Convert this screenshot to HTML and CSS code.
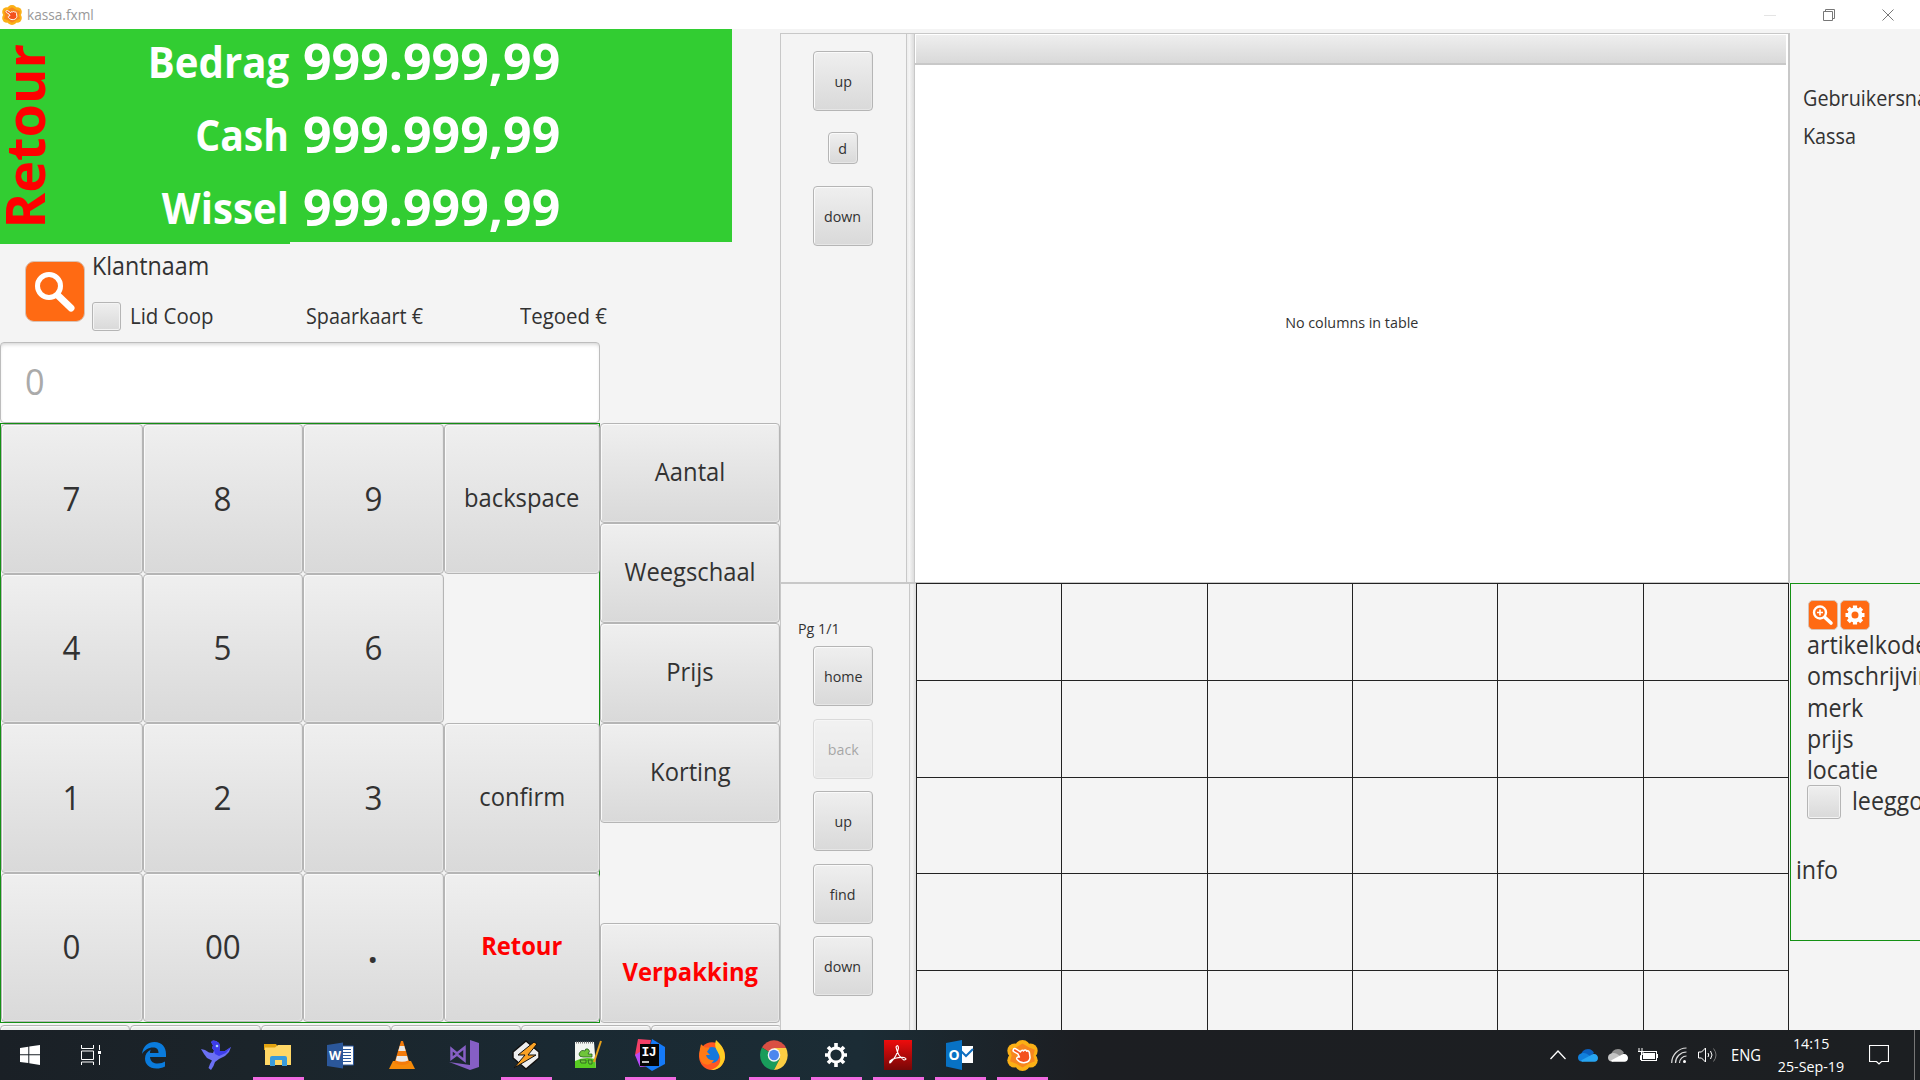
FILE: index.html
```html
<!DOCTYPE html>
<html lang="nl">
<head>
<meta charset="utf-8">
<title>kassa.fxml</title>
<link rel="stylesheet" href="styles.css">
</head>
<body>
<svg class="defs" width="0" height="0">
  <defs>
    <symbol id="hand-flower" viewBox="0 0 30 30">
      <g fill="#fbb016"><circle cx="15" cy="7.500" r="7.500"/><circle cx="15" cy="22.500" r="7.500"/><circle cx="7.500" cy="10.500" r="7.200"/><circle cx="22.500" cy="10.500" r="7.200"/><circle cx="7.500" cy="19.500" r="7.200"/><circle cx="22.500" cy="19.500" r="7.200"/></g>
      <path d="M15 3.500L21 7L27 9.500L25.500 15L27 20.500L21 23L15 26.500L9 23L3 20.500L4.500 15L3 9.500L9 7Z" fill="#f7861f"/>
      <path d="M6 9.500C6.500 8 8 8 9 8.800L13 11.500C13.500 10 15 9.500 16 10.500C17 9.300 18.700 9.500 19 10.800C20.500 10 21.500 11 21.700 12.500L22.300 17C22 19.500 20 21.500 17.500 21.800C14 22.500 11.500 21 9.500 18.500C9 17 10.500 16 12 16.500L10.500 13.500L7 11.500C6 11 5.700 10.300 6 9.500Z" fill="#f4511e" stroke="#fff" stroke-width="1.500" stroke-linejoin="round"/>
    </symbol>
    <symbol id="cloud" viewBox="0 0 20 13">
      <path fill="var(--back)" d="M3 7 C3 3 6 0 10 0 C13 0 15 2 16 4 L11 8 Z"/>
      <path fill="var(--side)" d="M4 12.500 C1 12.500 0 10.500 0 8.500 C0 6 2 4.500 4 4.300 C7 3.500 9 5 12 7 L5 12.500 Z"/>
      <path fill="var(--front)" d="M3 11.500 L14 5.500 C17.500 4 20 6.500 20 9 C20 11 18.500 12.800 16.500 12.800 L5 12.800 C4 12.800 3.500 12.300 3 11.500 Z"/>
    </symbol>
  </defs>
</svg>

<div class="screen">
  <header class="titlebar">
    <svg class="app-icon" viewBox="0 0 30 30"><use href="#hand-flower"/></svg>
    <span class="title t">kassa.fxml</span>
    <div class="window-controls">
      <svg width="12" height="12"><path d="M0 6.500H12" stroke="#e4e4e4" fill="none"/></svg>
      <svg width="12" height="12"><path d="M.5 2.500H9.500V11.500H.5ZM2.500 2.500V.5H11.500V9.500H9.500" stroke="#777" fill="none"/></svg>
      <svg width="12" height="12"><path d="M.5 .5L11.500 11.500M11.500 .5L.5 11.500" stroke="#777" fill="none"/></svg>
    </div>
  </header>

  <main class="main">
    <section class="left">
      <div class="totals">
        <div class="totals-labels">
          <div class="retour-side"><span>Retour</span></div>
          <div class="labels">
            <div><span class="tr">Bedrag</span></div>
            <div><span class="tr cash">Cash</span></div>
            <div><span class="tr">Wissel</span></div>
          </div>
        </div>
        <div class="amounts">
          <div>999.999,99</div>
          <div>999.999,99</div>
          <div>999.999,99</div>
        </div>
      </div>

      <div class="client">
        <button class="orange big-search"><svg width="58" height="58" viewBox="0 0 58 58" fill="none" stroke="#fff"><circle cx="23" cy="23" r="11.500" stroke-width="5"/><path d="M32 32.500L45 45" stroke-width="7" stroke-linecap="round"/></svg></button>
        <div class="client-info">
          <div class="client-name"><span class="t">Klantnaam</span></div>
          <div class="client-row">
            <i class="check"></i>
            <span class="lid"><span class="t">Lid Coop</span></span>
            <span class="spaar"><span class="t">Spaarkaart €</span></span>
            <span><span class="t">Tegoed €</span></span>
          </div>
        </div>
      </div>

      <div class="entry"><span class="t">0</span></div>

      <div class="pads">
        <div class="keypad">
          <button class="btn num"><span>7</span></button><button class="btn num"><span>8</span></button><button class="btn num"><span>9</span></button><button class="btn word"><span>backspace</span></button>
          <button class="btn num"><span>4</span></button><button class="btn num"><span>5</span></button><button class="btn num"><span>6</span></button><div></div>
          <button class="btn num"><span>1</span></button><button class="btn num"><span>2</span></button><button class="btn num"><span>3</span></button><button class="btn word"><span>confirm</span></button>
          <button class="btn num"><span>0</span></button><button class="btn num"><span>00</span></button><button class="btn num dot"><span>.</span></button><button class="btn word red"><span>Retour</span></button>
        </div>
        <div class="functions">
          <button class="btn word"><span>Aantal</span></button>
          <button class="btn word"><span>Weegschaal</span></button>
          <button class="btn word"><span>Prijs</span></button>
          <button class="btn word"><span>Korting</span></button>
          <div></div>
          <button class="btn word red"><span>Verpakking</span></button>
        </div>
      </div>
      <div class="more"><button class="btn"></button><button class="btn"></button><button class="btn"></button><button class="btn"></button><button class="btn"></button><button class="btn"></button></div>
    </section>

    <section class="center">
      <div class="upper">
        <div class="tools tools-top">
          <button class="btn sq"><span>up</span></button>
          <button class="btn small"><span>d</span></button>
          <button class="btn sq"><span>down</span></button>
        </div>
        <div class="divider"></div>
        <div class="table">
          <div class="table-head"></div>
          <div class="table-empty"><span>No columns in table</span></div>
        </div>
      </div>
      <div class="lower">
        <div class="tools tools-bottom">
          <div class="page"><span class="t">Pg 1/1</span></div>
          <button class="btn sq"><span>home</span></button>
          <button class="btn sq disabled"><span>back</span></button>
          <button class="btn sq"><span>up</span></button>
          <button class="btn sq"><span>find</span></button>
          <button class="btn sq"><span>down</span></button>
        </div>
        <div class="divider low"></div>
        <div class="grid">
          <i></i><i></i><i></i><i></i><i></i><i></i>
          <i></i><i></i><i></i><i></i><i></i><i></i>
          <i></i><i></i><i></i><i></i><i></i><i></i>
          <i></i><i></i><i></i><i></i><i></i><i></i>
          <i></i><i></i><i></i><i></i><i></i><i></i>
        </div>
      </div>
    </section>

    <aside class="right">
      <div class="user">
        <div><span class="t">Gebruikersnaam</span></div>
        <div><span class="t">Kassa</span></div>
      </div>
      <div class="article">
        <div class="article-tools">
          <button class="orange"><svg width="30" height="30" viewBox="0 0 30 30" fill="none" stroke="#fff"><circle cx="12" cy="12.500" r="6" stroke-width="2.400"/><path d="M9 12.500H15M12 9.500V15.500" stroke-width="1.600"/><path d="M17 17.500L23 23" stroke-width="3.600" stroke-linecap="round"/></svg></button>
          <button class="orange"><svg width="30" height="30" viewBox="0 0 30 30" fill="none" stroke="#fff"><circle cx="15" cy="15" r="5.500" stroke-width="4"/><path d="M15 5.500V9M15 21V24.500M5.500 15H9M21 15H24.500M8.300 8.300L10.800 10.800M19.200 19.200L21.700 21.700M21.700 8.300L19.200 10.800M10.800 19.200L8.300 21.700" stroke-width="4.200"/></svg></button>
        </div>
        <div class="field"><span class="t">artikelkode</span></div>
        <div class="field"><span class="t">omschrijving</span></div>
        <div class="field"><span class="t">merk</span></div>
        <div class="field"><span class="t">prijs</span></div>
        <div class="field"><span class="t">locatie</span></div>
        <div class="deposit"><i class="check"></i><span class="t">leeggoed</span></div>
        <div class="info"><span class="t">info</span></div>
      </div>
    </aside>
  </main>

  <footer class="taskbar">
    <div class="apps">
      <div class="app"><svg width="20" height="20" fill="#fff"><path d="M0 3L8.300 1.800V9.300H0ZM9.300 1.600L20 0V9.300H9.300ZM0 10.300H8.300V18L0 16.900ZM9.300 10.300H20V20L9.300 18.300Z"/></svg></div>
      <div class="app taskview"><svg width="20" height="20" fill="none" stroke="#fff"><path d="M.5 0V3.500H12.500V0M.5 6V14.500H12.500V6ZM.5 20V17H12.500V20M18.500 0V5M18.500 10V20"/><rect x="17" y="6" width="3" height="3" fill="#fff" stroke="none"/></svg></div>
      <div class="app"><svg width="26" height="28" viewBox="0 0 26 28"><path d="M1 13C2 5 7 1 13.500 1C21 1 25 6 25 13V16H9C9.500 21 13 22.500 16.500 22.500C20 22.500 22 21.500 24 20.500V25.500C21 27 18.500 27.500 15.500 27.500C8 27.500 4 23 4 17.500C4 13.500 6 10.500 10 8.500C9.200 9.500 9 11 9 12H17.500C17.500 8 15.500 6.500 12 6.500C7.500 6.500 3.500 9 1 13Z" fill="#0a7bdc"/></svg></div>
      <div class="app"><svg width="30" height="30" viewBox="0 0 30 30"><path d="M0 9L4 10L8 12.500L12 13L13 10.500L11 8L12 5.500L10 2L12 .5L15 1L18 3L19 6L18.500 11L24 11L30 7L28 12L24 16L18 19L14 22L12.500 26L10 30L7.500 28L9 24L11 20.500L6 18L3 14Z" fill="#6b70f4"/><path d="M10 2L12 .5L15 1L18 3L19 6L18.500 11L24 11L30 7L25 13L18 16L14 14L13 10.500L11 8L12 5.500Z" fill="#3d3cec"/><circle cx="16" cy="6" r="1.300" fill="#a9d4ff"/></svg></div>
      <div class="app open"><svg width="28" height="24" viewBox="0 0 28 24"><path d="M0 1H12L14 4V7H0Z" fill="#e2a310"/><path d="M1 4.500H11L14 2H27V22H1Z" fill="#ffd766"/><path d="M6 23V15Q6 13 8 13H21Q23 13 23 15V23H18V17H11V23Z" fill="#399bdc"/></svg></div>
      <div class="app"><svg width="27" height="27" viewBox="0 0 27 27"><path d="M15 4H26.500V23H15Z" fill="#fff" stroke="#2b579a"/><path d="M16 7.500H24M16 10.500H24M16 13.500H24M16 16.500H24M16 19.500H24" stroke="#2b579a"/><path d="M0 3L16 .5V26.500L0 24Z" fill="#2b579a"/><text x="2" y="18" class="glyph word-w">W</text></svg></div>
      <div class="app"><svg width="26" height="28" viewBox="0 0 26 28"><path d="M4 20H22L26 28H0Z" fill="#f58a0a"/><path d="M12 0H14L20.500 22Q13 26 5.500 22Z" fill="#f47b0a"/><path d="M10.700 5H15.300L16.700 10H9.300ZM8 15H18L19.300 19.500Q13 22 6.700 19.500Z" fill="#e8e8e8"/></svg></div>
      <div class="app"><svg width="30" height="30" viewBox="0 0 30 30"><path d="M21 0L30 3V27L21 30L0 22L21 25Z" fill="#865fc5"/><path d="M2.500 9L8 13.500L15.500 7.500V20.500L8 14.500L2.500 18.500Z" fill="none" stroke="#865fc5" stroke-width="2.500"/></svg></div>
      <div class="app open"><svg width="28" height="30" viewBox="0 0 28 30"><path d="M14 1L27 12V18L14 29L1 18V12Z" fill="#eee" stroke="#111" stroke-width="1.500"/><path d="M22 2L6 15H13L2 28L24 15H16L25 4Z" fill="#f9a125" stroke="#111"/></svg></div>
      <div class="app"><svg width="28" height="30" viewBox="0 0 28 30"><path d="M1 2H20L22 28H1Z" fill="#f2f5f0"/><path d="M1 21Q10 16 21 19L22 28H1Z" fill="#58cc22"/><path d="M2 2.500H20" stroke="#777" stroke-dasharray="1 1" stroke-width="2"/><path d="M5 14Q7 9 11 11Q11 8 14 9Q17 11 14 14H18V17H9Q5 17 5 14ZM6 20H12V23H7ZM14 20H18V24H15Z" fill="#6fc53a" stroke="#275a20" stroke-width=".8"/><path d="M27 1L20 22" stroke="#e6a11b" stroke-width="2"/></svg></div>
      <div class="app open"><svg width="30" height="34" viewBox="0 0 30 34"><path d="M3 1L16 2L12 24L0 17Z" fill="#f43f66"/><path d="M0 17L8 12L16 28L5 29Z" fill="#b74af7"/><path d="M17 1L30 9V26L17 33L10 28Z" fill="#157af8"/><rect x="5" y="6" width="19" height="22" fill="#050505"/><text x="6.500" y="18" class="glyph ij">IJ</text><path d="M7 24H14" stroke="#fff" stroke-width="1.500"/></svg></div>
      <div class="app"><svg width="28" height="30" viewBox="0 0 28 28" preserveAspectRatio="none"><circle cx="14" cy="15" r="13" fill="#ff5722"/><circle cx="14" cy="14" r="7.500" fill="#1478dd"/><path d="M18 0C23 4 27 9 27 16C26 24 20 28 13 28C21 25 23 21 22 16C21 11 15 8 18 0Z" fill="#ffcd24"/><path d="M3 4L7 7H12L9 11L12 14H8Q9 19 16 19Q12 25 5 22Q-1 17 3 4Z" fill="#ff7a16"/></svg></div>
      <div class="app open"><svg width="28" height="30" viewBox="0 0 28 28" preserveAspectRatio="none"><path d="M14 14L2 7A14 14 0 0 1 26 7Z" fill="#d94f43"/><path d="M14 14L1.900 7A14 14 0 0 0 14 28L20 17Z" fill="#199c5b"/><path d="M14 14L20 17L14 28A14 14 0 0 0 26.100 7.500H14Z" fill="#fccd43"/><circle cx="14" cy="14" r="6.300" fill="#f5f5f5"/><circle cx="14" cy="14" r="5" fill="#4b87ee"/></svg></div>
      <div class="app open"><svg width="24" height="26" viewBox="0 0 24 26" fill="none" stroke="#fff"><circle cx="12" cy="13" r="7" stroke-width="2.800"/><path d="M12 1V5M12 21V25M1 13H4M20 13H23M4 5L7 8M17 18L20 21M20 5L17 8M7 18L4 21" stroke-width="3.600"/></svg></div>
      <div class="app open"><svg width="28" height="30" viewBox="0 0 28 30"><defs><linearGradient id="pdf" x2="0" y2="1"><stop stop-color="#ee0c0c"/><stop offset="1" stop-color="#770707"/></linearGradient></defs><rect width="28" height="30" fill="url(#pdf)"/><path d="M12 7Q14 4 14.500 8Q13 16 7 22Q5 24 6 21Q11 17 20 17.500Q24 19 20 20Q14 17 12 7Z" fill="none" stroke="#fff" stroke-width="1.200"/></svg></div>
      <div class="app open"><svg width="28" height="30" viewBox="0 0 28 30"><path d="M14 6H27V23H14Z" fill="#fff"/><path d="M15 11L20 16L27 9" fill="none" stroke="#0f6fc2" stroke-width="2"/><path d="M0 3L16 0V30L0 26.500Z" fill="#0872c4"/><text x="2.500" y="20" class="glyph">O</text></svg></div>
      <div class="app open"><svg width="31" height="31"><use href="#hand-flower"/></svg></div>
    </div>
    <div class="tray">
      <svg class="chev" width="16" height="10" fill="none" stroke="#fff" stroke-width="1.300"><path d="M.5 9L8 1L15.500 9"/></svg>
      <svg class="cloud blue" width="20" height="13"><use href="#cloud"/></svg>
      <svg class="cloud gray" width="20" height="13"><use href="#cloud"/></svg>
      <svg class="battery" width="20" height="14"><path d="M1 0V3M4 0V3M0 3.500H5V6L2.500 7.500V12" fill="none" stroke="#fff"/><rect x="3.500" y="3.500" width="15" height="9" fill="none" stroke="#fff"/><rect x="5" y="5" width="12" height="6" fill="#fff"/><path d="M19.500 6V10" stroke="#fff"/></svg>
      <svg class="wifi" width="16" height="17" fill="none" stroke="#ddd" stroke-width="1.200"><path d="M.7 16A15 15 0 0 1 15.500 1M4.500 16A11 11 0 0 1 15.500 5M8.500 16A7 7 0 0 1 15.500 9"/><circle cx="13.500" cy="14.500" r="1.500" fill="#fff" stroke="none"/></svg>
      <svg class="volume" width="21" height="18" fill="none" stroke="#fff"><path d="M.5 6H3.500L7.500 2V16L3.500 12H.5Z"/><path d="M10 7Q11.500 9 10 11M12.500 5Q15.500 9 12.500 13"/><path d="M15.500 2.500Q20.500 9 15.500 15.500" stroke="#777"/></svg>
      <span class="lang">ENG</span>
      <div class="clock"><span>14:15</span><span>25-Sep-19</span></div>
      <svg class="notif" width="20" height="20" fill="none" stroke="#fff"><path d="M.5 .5H19.500V16.500H12.500L10 19L7.500 16.500H.5Z" stroke-width="1.200"/></svg>
      <div class="desktop"></div>
    </div>
  </footer>
</div>
</body>
</html>
```

FILE: styles.css
```css
* { box-sizing: border-box; }
body {
  margin: 0;
  font-family: "Open Sans", "Noto Sans", sans-serif;
  color: #323232;
  background: #f4f4f4;
  overflow: hidden;
}
button { font-family: inherit; color: inherit; padding: 0; margin: 0; }
svg { display: block; flex: none; }
.defs { position: absolute; }
.screen { width: 1920px; height: 1080px; display: flex; flex-direction: column; overflow: hidden; }
.t, .btn span, .tr { display: inline-block; white-space: nowrap; transform: scaleX(.95); }
.t { transform-origin: left; }
.tr { transform: scaleX(.935); transform-origin: right; }
.cash { transform: scaleX(.91); }

/* title bar */
.titlebar { height: 29px; background: #fff; display: flex; align-items: center; padding-left: 2px; }
.app-icon { width: 20px; height: 20px; }
.title { margin-left: 5px; font-size: 15px; line-height: 29px; color: #999; transform: scaleX(.91); }
.window-controls { margin-left: auto; display: flex; gap: 47px; padding-right: 26px; }

.main { height: 1001px; display: flex; overflow: hidden; }

/* left pane */
.left { width: 780px; flex: none; display: flex; flex-direction: column; overflow: hidden; }
.totals { display: flex; height: 215px; flex: none; font-weight: 700; color: #fff; }
.totals-labels { width: 290px; height: 215px; background: #32cd32; display: flex; }
.retour-side { width: 48px; display: flex; align-items: center; justify-content: center; }
.retour-side span { writing-mode: vertical-rl; transform: rotate(180deg); font-size: 54px; line-height: 74px; }
.retour-side span { color: #f00; }
.labels { flex: 1; text-align: right; padding-right: 1px; font-size: 43px; line-height: 65px; }
.labels div, .amounts div { height: 73px; }
.amounts { width: 442px; height: 213px; background: #32cd32; padding-left: 13px; font-size: 50px; line-height: 64px; }

.client { height: 98px; flex: none; display: flex; padding-left: 25px; }
.orange { border: 1px solid #d9c2b4; border-radius: 5px; background: #ff6a13; width: 30px; height: 30px; display: flex; align-items: center; justify-content: center; }
.big-search { width: 60px; height: 61px; margin-top: 17px; border-radius: 9px; }
.client-info { margin-left: 7px; }
.client-name { font-size: 25px; line-height: 43px; height: 58px; }
.client-name .t { transform: scaleX(.93); }
.client-row { display: flex; font-size: 21.500px; line-height: 28px; }
.check { width: 29px; height: 29px; border: 1px solid #b5b5b5; border-radius: 3px; background: linear-gradient(#efefef, #d9d9d9); box-shadow: inset 0 0 0 1px #f4f4f4; }
.lid { width: 176px; margin-left: 9px; white-space: nowrap; }
.spaar { width: 214px; }
.spaar .t { transform: scaleX(.92); }

.entry { width: 600px; height: 81px; flex: none; background: #fff; border: 1px solid #bdbdbd; border-radius: 4px; box-shadow: inset 0 3px 4px -2px #ccc; padding-left: 24px; font-size: 36px; line-height: 77px; color: #aaa; }

.btn { border: 1px solid #b5b5b5; border-radius: 4px; background: linear-gradient(#efefef, #d9d9d9); box-shadow: inset 1px 1px 0 #fafafa, inset -1px -1px 0 #e6e6e6; display: flex; align-items: center; justify-content: center; }
.pads { display: flex; height: 600px; flex: none; }
.keypad { width: 600px; border: 1px solid #149014; display: grid; grid-template-columns: 142px 160px 141px 156px; grid-template-rows: repeat(4, 149.500px); }
.num { font-size: 33px; line-height: 44px; padding-right: 1px; }
.dot { font-size: 42px; font-weight: 600; }
.word { font-size: 25px; line-height: 34px; padding-bottom: 4px; }
.red { color: #f00; font-weight: 700; }
.functions { width: 180px; display: grid; grid-template-rows: repeat(6, 100px); }
.functions .word { padding-bottom: 5px; }
.more { display: grid; grid-template-columns: repeat(6, 130.300px); height: 5px; margin-top: 2px; overflow: hidden; }
.more .btn { height: 40px; }

/* centre pane */
.center { width: 1010px; flex: none; padding-top: 4px; display: flex; flex-direction: column; }
.upper { height: 549px; flex: none; display: flex; }
.tools { border: 1px solid #c8c8c8; border-bottom: 0; display: flex; flex-direction: column; font-size: 15px; }
.tools .btn { font-size: 15px; }
.tools-top { width: 127px; padding: 17px 0 0 32px; }
.sq { width: 60px; height: 60px; flex: none; }
.small { width: 30px; height: 32px; margin: 21px 0 22px 15px; }
.divider { width: 7px; border-top: 1px solid #c8c8c8; background: linear-gradient(90deg, #ededed, #f4f4f4 35%, #dcdcdc); }
.divider.low { width: 6px; }
.table { width: 876px; border: 1px solid #c8c8c8; border-right-width: 2px; border-bottom: 0; background: #fff; display: flex; flex-direction: column; }
.table-head { height: 31px; margin-right: 2px; border-bottom: 2px solid #c8c8c8; background: linear-gradient(#efefef, #d9d9d9); box-shadow: inset 1px 1px 0 #fff; }
.table-empty { flex: 1; display: flex; align-items: center; justify-content: center; font-size: 15px; padding-bottom: 4px; }
.table-empty span { transform: scaleX(.955); }
.lower { flex: 1; display: flex; border-top: 1px solid #c8c8c8; overflow: hidden; }
.tools-bottom { width: 130px; padding-left: 32px; gap: 12.400px; }
.page { height: 50px; margin-left: -15px; padding-top: 34px; line-height: 20px; }
.disabled { opacity: .4; }
.grid { width: 873px; height: 600px; border-right: 1px solid #222; display: grid; grid-template-columns: repeat(6, 1fr); grid-auto-rows: 96.800px; }
.grid i { border-left: 1px solid #222; border-top: 1px solid #222; }

/* right pane */
.right { width: 130px; flex: none; overflow: hidden; }
.right .t { transform: scaleX(.93); }
.user { height: 554px; padding: 50px 0 0 13px; font-size: 21.500px; line-height: 38px; }
.user .t { transform: scaleX(.92); }
.article { width: 230px; height: 358px; border: 1px solid #149014; padding: 16px 0 0 16px; font-size: 25px; }
.article-tools { display: flex; gap: 2px; margin: 0 0 -1px 1px; }
.field { line-height: 31.300px; height: 31.300px; }
.deposit { display: flex; align-items: center; line-height: 31px; height: 34px; }
.deposit .check { width: 34px; height: 34px; flex: none; }
.deposit .t { margin: -3px 0 0 11px; }
.info { line-height: 34px; margin: 33px 0 0 -11px; }

/* task bar */
.taskbar { height: 50px; display: flex; justify-content: space-between; background: linear-gradient(90deg, #1a2026, #1b242a 250px, #1a2932 550px, #1b2c35 860px, #1c1e22 1080px, #1c1f22); color: #fff; }
.apps { display: flex; margin-left: -1px; }
.app { width: 62px; height: 50px; display: flex; align-items: center; justify-content: center; position: relative; }
.taskview { padding-right: 3px; }
.app.open::after { content: ""; position: absolute; left: 6px; right: 5px; bottom: 0; height: 3px; background: #f06ae0; }
.glyph { font: 700 14px "Open Sans", sans-serif; fill: #fff; }
.word-w { font-size: 12.500px; }
.ij { font: 700 13px "Liberation Mono", monospace; letter-spacing: -.5px; }
.tray { display: flex; align-items: center; }
.cloud { margin-left: 10px; }
.chev + .cloud { margin-left: 12px; }
.blue { --back: #0a5fbd; --side: #1180dc; --front: #27a5f2; }
.gray { --back: #8f8f8f; --side: #c4c4c4; --front: #fff; }
.battery { margin-left: 10px; }
.wifi { margin-left: 13px; }
.volume { margin-left: 11px; }
.lang { width: 33px; margin-left: 12px; font-size: 15.500px; transform: scaleX(.95); transform-origin: left; }
.clock { width: 72px; margin-left: 11px; display: flex; flex-direction: column; align-items: center; font-size: 15px; line-height: 23px; white-space: nowrap; padding-bottom: 1px; }
.clock span { transform: scaleX(.95); }
.notif { margin-left: 22px; }
.desktop { width: 6px; height: 50px; margin-left: 25px; border-left: 1px solid #777; }
```
